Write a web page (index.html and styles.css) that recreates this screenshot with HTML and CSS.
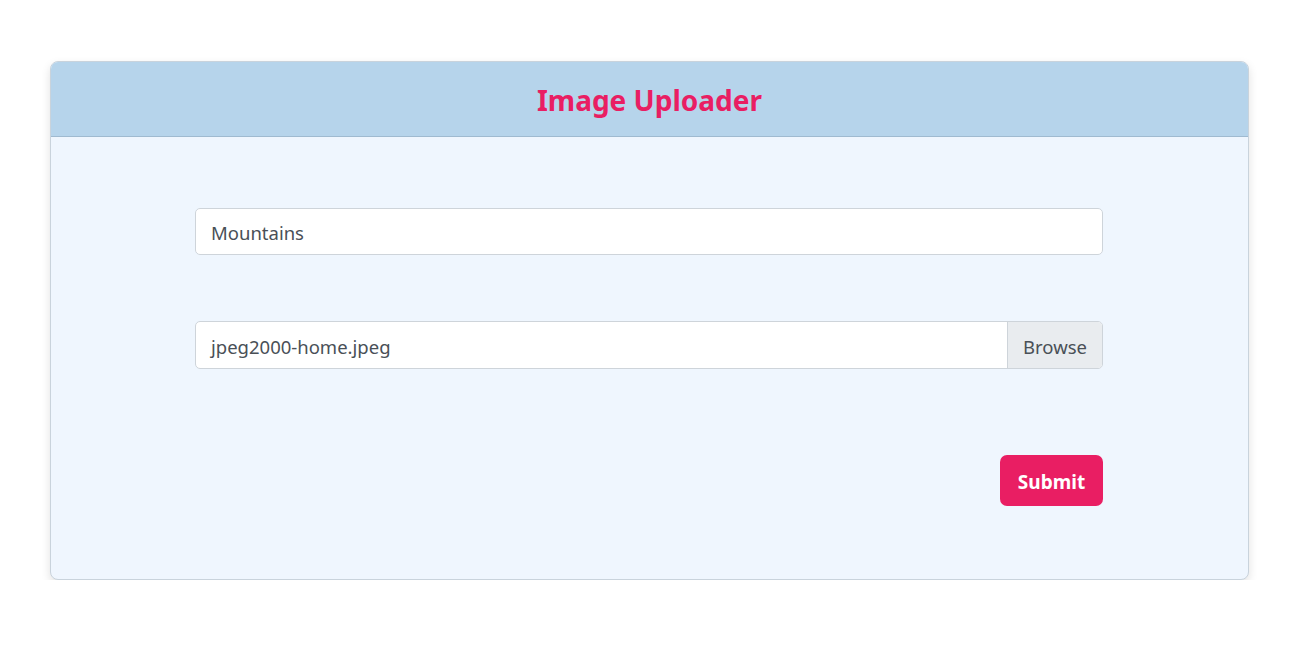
FILE: index.html
```html
<!DOCTYPE html>
<html>
<head>
<meta charset="utf-8">
<link rel="stylesheet" href="styles.css">
</head>
<body>
<div class="page">
  <div class="card">
    <div class="card-header">
      <h1 class="title">Image Uploader</h1>
    </div>
    <div class="card-body">
      <form class="form">
        <div class="field first">
          <div class="input">Mountains</div>
        </div>
        <div class="field second">
          <div class="file">
            <div class="file-name">jpeg2000-home.jpeg</div>
            <div class="browse">Browse</div>
          </div>
        </div>
        <div class="actions">
          <button type="button" class="submit">Submit</button>
        </div>
      </form>
    </div>
  </div>
</div>
</body>
</html>
```
FILE: styles.css
```css
html, body {
  margin: 0;
  padding: 0;
  background: #ffffff;
}
body {
  font-family: "Noto Sans", "Open Sans", sans-serif;
  color: #495057;
}
.page {
  padding: 61px 41px 0 50px;
}
.card {
  border: 1px solid #c9d3dc;
  border-radius: 8px;
  overflow: hidden;
  box-shadow: 0 4px 10px rgba(0, 0, 0, 0.12);
  background: #eff6fe;
}
.card-header {
  background: #b6d4eb;
  border-bottom: 1px solid #9fbad0;
  height: 74px;
  display: flex;
  align-items: center;
  justify-content: center;
}
.title {
  margin: 2px 0 0 0;
  font-size: 28px;
  font-weight: 700;
  color: #e91e63;
}
.card-body {
  padding: 71px 145px 73px 144px;
}
.form {
  display: flex;
  flex-direction: column;
}
.field.second {
  margin-top: 66px;
}
.input, .file {
  box-sizing: border-box;
  border: 1px solid #ced4da;
  border-radius: 5px;
  background: #ffffff;
  font-size: 18.5px;
}
.input {
  height: 47px;
  display: flex;
  align-items: center;
  padding: 2px 15px 0 15px;
}
.file {
  height: 48px;
  display: flex;
  overflow: hidden;
}
.file-name {
  flex: 1;
  display: flex;
  align-items: center;
  padding: 2px 15px 0 15px;
}
.browse {
  width: 94px;
  background: #e9ecef;
  border-left: 1px solid #ced4da;
  display: flex;
  align-items: center;
  justify-content: center;
  padding-top: 2px;
}
.actions {
  display: flex;
  justify-content: flex-end;
  margin-top: 86px;
}
.submit {
  width: 103px;
  height: 51px;
  border: none;
  border-radius: 7px;
  background: #e91e63;
  color: #ffffff;
  font-family: inherit;
  font-size: 19px;
  font-weight: 700;
  padding: 2px 0 0 0;
}
```
